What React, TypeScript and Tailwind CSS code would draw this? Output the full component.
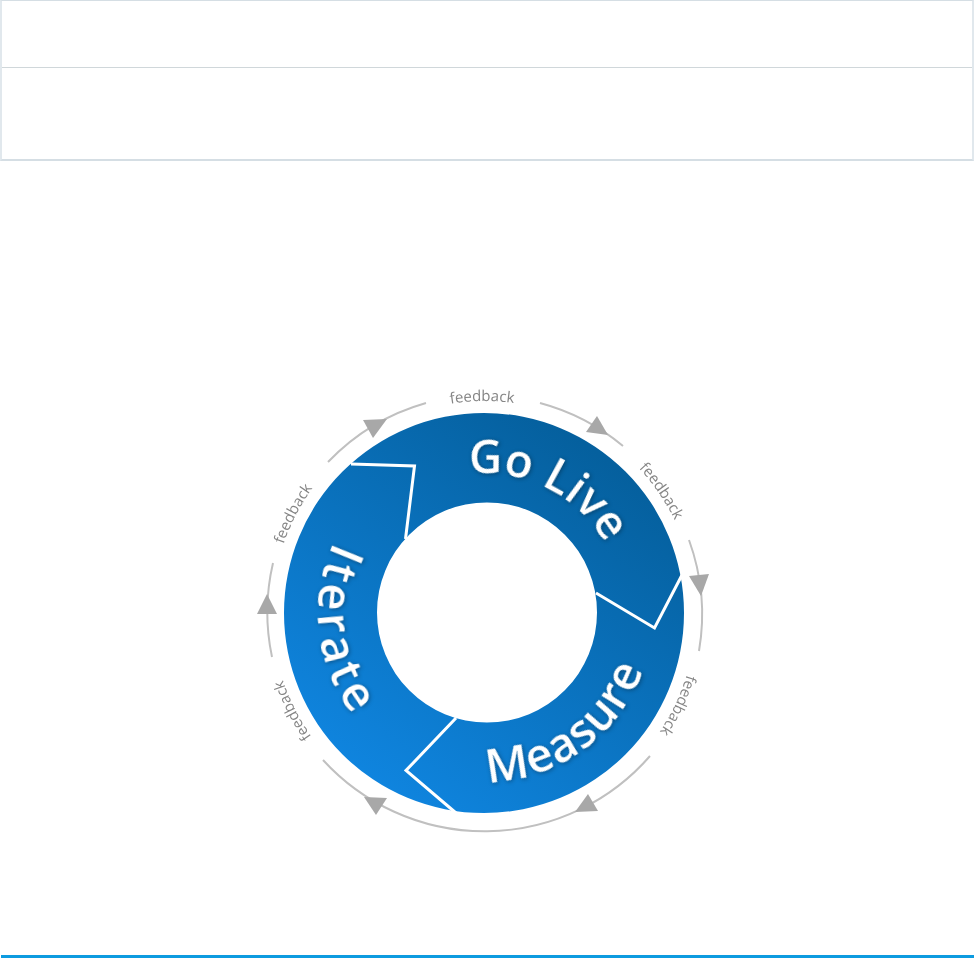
const CX = 484
const CY = 613

// same circle, rotated into place for each label
const FEEDBACK_ANGLES = [-0.5, 55.5, 115.5, 243, 297.5]

const ARCS = [
  "M328 462A218 218 0 0 1 426 403",
  "M540 403A218 218 0 0 1 623 446",
  "M689 540A218 218 0 0 1 699 651",
  "M650 756A219 219 0 0 1 323 760",
  "M272 657A217 217 0 0 1 273 563",
]

const ARROWS = [
  "363,420 387,419 373,438",
  "597,416 586,432 608,435",
  "689,576 709,574 701,596",
  "588,794 598,811 575,812",
  "364,797 387,798 376,815",
  "267,594 257,614 277,614",
]

function CycleDiagram() {
  return (
    <svg width="500" height="480" viewBox="234 370 500 480" className="block">
      <defs>
        <linearGradient id="ring" gradientUnits="userSpaceOnUse" x1="390" y1="790" x2="620" y2="470">
          <stop offset="0" stopColor="#0f84de" />
          <stop offset="1" stopColor="#05609e" />
        </linearGradient>
        <path id="feedbackArc" d={`M${CX - 212} ${CY}A212 212 0 0 1 ${CX + 212} ${CY}`} />
        <path id="goLiveArc" d={`M${CX - 140} ${CY}A140 140 0 0 1 ${CX + 140} ${CY}`} />
        <path id="measureArc" d="M315 613A169 169 0 0 0 653 613" />
        <path id="iterateArc" d="M318 613A166 166 0 0 0 650 613" />
      </defs>

      <path
        fill="url(#ring)"
        fillRule="evenodd"
        d="M284 613A200 200 0 1 1 684 613A200 200 0 1 1 284 613ZM377 612.5A110 110 0 1 0 597 612.5A110 110 0 1 0 377 612.5Z"
      />
      <g fill="none" stroke="#fff" strokeWidth="3">
        <polyline points="351,464 414.5,466 405.5,539" />
        <polyline points="682,575 654.5,628 596,593" />
        <polyline points="456,718 406,770.5 456,813" />
      </g>

      <g className="font-['Open_Sans',sans-serif] font-semibold drop-shadow-[1px_1px_2px_rgba(0,0,0,0.35)]" fill="#fff">
        <text transform={`rotate(27 ${CX} ${CY})`} textAnchor="middle" fontSize="46">
          <textPath href="#goLiveArc" startOffset="50%">Go Live</textPath>
        </text>
        <text transform={`rotate(-36 ${CX} ${CY})`} textAnchor="middle" fontSize="47" letterSpacing="1">
          <textPath href="#measureArc" startOffset="50%">Measure</textPath>
        </text>
        <text transform={`rotate(83 ${CX} ${CY})`} textAnchor="middle" fontSize="47" letterSpacing="5">
          <textPath href="#iterateArc" startOffset="50%">Iterate</textPath>
        </text>
      </g>

      <g fill="none" stroke="#c0c0c0" strokeWidth="2">
        {ARCS.map((d) => (
          <path key={d} d={d} />
        ))}
      </g>
      <g fill="#a8a8a8">
        {ARROWS.map((p) => (
          <polygon key={p} points={p} />
        ))}
      </g>

      <g className="font-['Open_Sans',sans-serif] text-[15px] font-normal" fill="#858585">
        {FEEDBACK_ANGLES.map((a) => (
          <text key={a} transform={`rotate(${a} ${CX} ${CY})`} textAnchor="middle">
            <textPath href="#feedbackArc" startOffset="50%">feedback</textPath>
          </text>
        ))}
      </g>
    </svg>
  )
}

export default function App() {
  return (
    <div className="h-[958px] w-[974px] bg-white flex flex-col overflow-hidden">
      {/* empty table */}
      <div className="h-[161px] shrink-0 flex flex-col border-t border-t-[#d5dee4] border-b-2 border-b-[#d5dee4] border-x-2 border-x-[#e1e8ed]">
        <div className="h-[67px] border-b border-b-[#d0d7da]" />
        <div className="flex-1" />
      </div>

      <div className="mt-[209px] ml-[234px]">
        <CycleDiagram />
      </div>

      <div className="mt-auto ml-[1px] h-[3px] bg-[#0d9be0]" />
    </div>
  )
}
